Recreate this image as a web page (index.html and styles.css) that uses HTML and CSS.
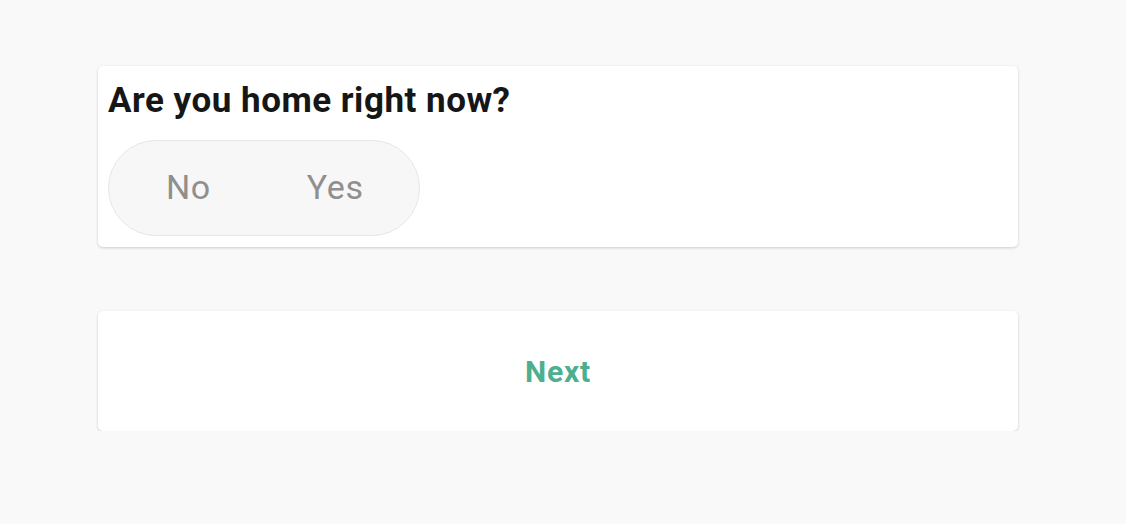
FILE: index.html
```html
<!DOCTYPE html>
<html>
<head>
<meta charset="utf-8">
<link rel="stylesheet" href="styles.css">
</head>
<body>
<main class="page">
  <section class="card question">
    <h1 class="title">Are you home right now?</h1>
    <div class="toggle">
      <span class="option">No</span>
      <span class="option">Yes</span>
    </div>
  </section>
  <section class="card action">
    <button class="next">Next</button>
  </section>
</main>
</body>
</html>
```
FILE: styles.css
```css
html, body {
  margin: 0;
  padding: 0;
  background: #f9f9f9;
  font-family: Roboto, "Liberation Sans", sans-serif;
}
.page {
  width: 920px;
  margin: 0 auto;
  padding-top: 66px;
  display: flex;
  flex-direction: column;
  gap: 64px;
  transform: translateX(-5px);
}
.card {
  background: #fff;
  border-radius: 5px;
  box-shadow: 0 1px 3px rgba(0,0,0,0.18);
}
.question {
  height: 181px;
  box-sizing: border-box;
  padding: 14px 10px 10px;
}
.title {
  margin: 0;
  font-size: 35px;
  line-height: 41px;
  font-weight: 700;
  letter-spacing: 0.5px;
  color: #161616;
}
.toggle {
  margin-top: 19px;
  width: 312px;
  height: 96px;
  box-sizing: border-box;
  border: 1px solid #e6e6e6;
  border-radius: 48px;
  background: #f7f7f7;
  display: flex;
  align-items: center;
  padding-left: 57px;
  padding-bottom: 3px;
  gap: 96px;
}
.option {
  font-size: 34px;
  letter-spacing: 0.6px;
  color: #8f8f8f;
}
.action {
  height: 120px;
  display: flex;
  align-items: center;
  justify-content: center;
}
.next {
  border: 0;
  background: none;
  font-family: Roboto, "Liberation Sans", sans-serif;
  font-weight: 700;
  font-size: 30px;
  letter-spacing: 0.8px;
  color: #4daf8f;
  padding: 0;
}
```
